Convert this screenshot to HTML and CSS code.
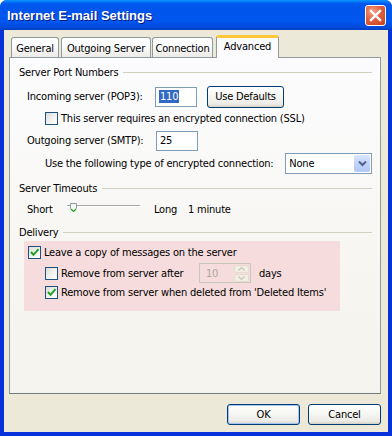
FILE: index.html
```html
<!DOCTYPE html>
<html lang="en">
<head>
    <meta charset="UTF-8">
    <title>Internet E-mail Settings</title>
    <link rel="stylesheet" href="styles.css">
</head>
<body>
<div class="window">
    <div class="titlebar">
        <span class="title">Internet E-mail Settings</span>
        <span class="close-btn">
            <svg width="13" height="13" viewBox="0 0 13 13"><path d="M2 2 L11 11 M11 2 L2 11" stroke="#fff" stroke-width="2.4" stroke-linecap="square"/></svg>
        </span>
    </div>

    <div class="client">
        <!-- Tabs -->
        <div class="tabs">
            <div class="tab tab-general">General</div>
            <div class="tab tab-outgoing">Outgoing Server</div>
            <div class="tab tab-connection">Connection</div>
            <div class="tab tab-advanced active">Advanced</div>
        </div>

        <div class="panel">
            <div class="group-title"><span>Server Port Numbers</span><div class="rule"></div></div>

            <div class="row row-incoming">
                <span class="label port-label">Incoming server (POP3):</span>
                <span class="textbox port-box"><span class="selected">110</span></span>
                <span class="button defaults-btn">Use Defaults</span>
            </div>

            <div class="row row-ssl indent2">
                <span class="checkbox"></span>
                <span class="label">This server requires an encrypted connection (SSL)</span>
            </div>

            <div class="row row-smtp">
                <span class="label port-label smtp-label">Outgoing server (SMTP):</span>
                <span class="textbox port-box">25</span>
            </div>

            <div class="row row-enc">
                <span class="label enc-label">Use the following type of encrypted connection:</span>
                <span class="select">
                    <span class="select-text">None</span>
                    <span class="select-arrow">
                        <svg width="9" height="7" viewBox="0 0 9 7"><path d="M1 1.5 L4.5 5 L8 1.5" fill="none" stroke="#4d6185" stroke-width="2"/></svg>
                    </span>
                </span>
            </div>

            <div class="group-title timeouts-title"><span>Server Timeouts</span><div class="rule"></div></div>

            <div class="row row-slider">
                <span class="label short-label">Short</span>
                <span class="slider">
                    <svg width="74" height="14" viewBox="0 0 74 14">
                        <line x1="0" y1="5.5" x2="73" y2="5.5" stroke="#a7a6aa"/>
                        <line x1="0" y1="6.5" x2="73" y2="6.5" stroke="#ffffff"/>
                        <path d="M3.5 3.5 H9.5 V8.5 L6.5 11.5 L3.5 8.5 Z" fill="#f7f7f4" stroke="#8b9aa0"/>
                        <path d="M4 9 L6.5 11.5 L9 9" fill="none" stroke="#21a121" stroke-width="1.2"/>
                    </svg>
                </span>
                <span class="label long-label">Long</span>
                <span class="label">1 minute</span>
            </div>

            <div class="group-title delivery-title"><span>Delivery</span><div class="rule"></div></div>

            <div class="highlight">
                <div class="row row-leave">
                    <span class="checkbox checked">
                        <svg width="11" height="11" viewBox="0 0 11 11"><path d="M2 5 L4.5 7.8 L9.5 2.2" fill="none" stroke="#21a121" stroke-width="2"/></svg>
                    </span>
                    <span class="label">Leave a copy of messages on the server</span>
                </div>
                <div class="row row-after">
                    <span class="checkbox"></span>
                    <span class="label after-label">Remove from server after</span>
                    <span class="spinner">
                        <span class="spinner-text">10</span>
                        <span class="spinner-btns">
                            <span class="spin-btn"><svg width="7" height="4" viewBox="0 0 7 4"><path d="M0.5 3.5 L3.5 0.5 L6.5 3.5" fill="none" stroke="#c9c7ba" stroke-width="1.2"/></svg></span>
                            <span class="spin-btn"><svg width="7" height="4" viewBox="0 0 7 4"><path d="M0.5 0.5 L3.5 3.5 L6.5 0.5" fill="none" stroke="#c9c7ba" stroke-width="1.2"/></svg></span>
                        </span>
                    </span>
                    <span class="label days-label">days</span>
                </div>
                <div class="row row-deleted">
                    <span class="checkbox checked">
                        <svg width="11" height="11" viewBox="0 0 11 11"><path d="M2 5 L4.5 7.8 L9.5 2.2" fill="none" stroke="#21a121" stroke-width="2"/></svg>
                    </span>
                    <span class="label">Remove from server when deleted from 'Deleted Items'</span>
                </div>
            </div>
        </div>

        <div class="dialog-buttons">
            <span class="button dialog-btn default">OK</span>
            <span class="button dialog-btn">Cancel</span>
        </div>
    </div>
</div>
</body>
</html>
```

FILE: styles.css
```css
body {
    margin: 0;
    background-color: #ffffff;
    font-family: "DejaVu Sans Condensed", "DejaVu Sans", sans-serif;
    font-stretch: condensed;
    font-size: 11px;
    letter-spacing: -0.2px;
    color: #000000;
}

.window {
    width: 392px;
    height: 436px;
    display: flex;
    flex-direction: column;
    background-color: #0831d9;
    border-radius: 7px 7px 0 0;
    overflow: hidden;
}

.titlebar {
    height: 30px;
    flex-shrink: 0;
    display: flex;
    align-items: center;
    justify-content: space-between;
    padding: 0 6px 0 7px;
    background: linear-gradient(#0997ff 0%, #0058ee 12%, #0055ec 40%, #0057ef 70%, #0049da 92%, #003dbf 100%);
}

.title {
    font-family: "Liberation Sans", Arial, sans-serif;
    font-stretch: normal;
    letter-spacing: 0;
    font-weight: bold;
    font-size: 13px;
    color: #ffffff;
    text-shadow: 1px 1px 0 #0a1883;
    margin-top: 1px;
}

.close-btn {
    width: 19px;
    height: 19px;
    display: flex;
    align-items: center;
    justify-content: center;
    border: 1px solid #ffffff;
    border-radius: 3px;
    background: radial-gradient(circle at 35% 30%, #f0a48c 0%, #e2603f 45%, #c4401f 100%);
}

.client {
    flex: 1;
    display: flex;
    flex-direction: column;
    margin: 0 4px 4px 4px;
    background-color: #ece9d8;
}

/* Tabs */
.tabs {
    height: 22px;
    margin-top: 5px;
    padding-left: 7px;
    display: flex;
    align-items: flex-end;
}

.tab {
    height: 20px;
    box-sizing: border-box;
    display: flex;
    align-items: center;
    justify-content: center;
    border: 1px solid #919b9c;
    border-bottom: none;
    border-radius: 3px 3px 0 0;
    background: linear-gradient(#ffffff 0%, #fcfcfe 40%, #ecebe6 100%);
    padding-top: 1px;
}

.tab-general { width: 48px; margin-right: 2px; }
.tab-outgoing { width: 90px; margin-right: 1px; }
.tab-connection { width: 61px; margin-right: 3px; }

.tab.active {
    width: 63px;
    height: 23px;
    margin-bottom: -1px;
    background: #fcfcfe;
    border-top: 3px solid #ffc83c;
    padding-top: 0;
    padding-bottom: 4px;
    position: relative;
    z-index: 1;
}

.panel {
    height: 337px;
    box-sizing: border-box;
    margin: 0 7px 0 5px;
    border: 1px solid #919b9c;
    border-bottom-color: #6f7b7c;
    background: linear-gradient(#fcfcfe 0%, #f7f6f2 60%, #f4f3ee 100%);
    padding: 0 8px 0 9px;
    display: flex;
    flex-direction: column;
}

.group-title {
    height: 14px;
    display: flex;
    align-items: center;
    gap: 5px;
    margin-top: 7px;
}

.group-title .rule {
    flex: 1;
    border-top: 1px solid #d0d0bf;
}

.timeouts-title { margin-top: 7px; }
.delivery-title { margin-top: 7px; }

.row {
    display: flex;
    align-items: center;
}

.label {
    white-space: nowrap;
}

.row-incoming {
    height: 21px;
    margin-top: 7px;
    padding-left: 8px;
}

.port-label { width: 128px; }
.smtp-label { width: 129px; }

.textbox {
    height: 20px;
    box-sizing: border-box;
    border: 1px solid #7f9db9;
    background-color: #ffffff;
    display: flex;
    align-items: center;
    padding-left: 3px;
}

.port-box { width: 42px; }

.selected {
    background-color: #316ac5;
    color: #ffffff;
    padding: 0 1px;
    line-height: 13px;
}

.button {
    display: flex;
    align-items: center;
    justify-content: center;
    box-sizing: border-box;
    border: 1px solid #003c74;
    border-radius: 3px;
    background: linear-gradient(#ffffff 0%, #f7f7f4 40%, #ecebe6 85%, #d6d0c5 100%);
}

.defaults-btn {
    width: 77px;
    height: 22px;
    margin-left: 10px;
}

.row-ssl {
    height: 13px;
    margin-top: 5px;
    padding-left: 26px;
}

.checkbox {
    width: 13px;
    height: 13px;
    box-sizing: border-box;
    flex-shrink: 0;
    border: 1px solid #1c5180;
    background: linear-gradient(135deg, #dcdcd7 0%, #f4f4f1 60%, #ffffff 100%);
    margin-right: 3px;
    display: flex;
    align-items: center;
    justify-content: center;
}

.row-smtp {
    height: 21px;
    margin-top: 5px;
    padding-left: 8px;
}

.row-enc {
    height: 21px;
    margin-top: 2px;
    padding-left: 26px;
}

.enc-label { width: 241px; }

.select {
    width: 87px;
    height: 21px;
    box-sizing: border-box;
    border: 1px solid #7f9db9;
    background-color: #ffffff;
    display: flex;
    align-items: center;
    justify-content: space-between;
    padding: 0 1px 0 3px;
}

.select-arrow {
    width: 16px;
    height: 17px;
    border-radius: 2px;
    background: linear-gradient(#dbe6fd 0%, #c1d3fb 50%, #b4c8f6 100%);
    display: flex;
    align-items: center;
    justify-content: center;
}

.row-slider {
    height: 18px;
    margin-top: 5px;
    padding-left: 8px;
}

.short-label { width: 40px; }

.slider {
    width: 74px;
    height: 14px;
    margin-bottom: 4px;
    display: flex;
}

.long-label {
    margin-left: 13px;
    width: 34px;
}

.highlight {
    width: 316px;
    height: 70px;
    box-sizing: border-box;
    margin-top: 2px;
    margin-left: 5px;
    background-color: #f6dcdc;
    padding: 5px 0 0 4px;
    display: flex;
    flex-direction: column;
}

.row-leave { height: 13px; }

.row-after {
    height: 20px;
    margin-top: 4px;
    padding-left: 17px;
}

.after-label { width: 138px; }

.spinner {
    width: 52px;
    height: 20px;
    box-sizing: border-box;
    border: 1px solid #c9c7ba;
    display: flex;
    align-items: center;
    justify-content: space-between;
    padding: 0 1px 0 6px;
}

.spinner-text { color: #aca899; }

.spinner-btns {
    display: flex;
    flex-direction: column;
    gap: 1px;
}

.spin-btn {
    width: 15px;
    height: 8px;
    border-radius: 2px;
    background-color: #f2eee4;
    border: 1px solid #e4ded2;
    box-sizing: border-box;
    display: flex;
    align-items: center;
    justify-content: center;
}

.days-label { margin-left: 8px; }

.row-deleted {
    height: 13px;
    margin-top: 3px;
    padding-left: 17px;
}

.dialog-buttons {
    display: flex;
    justify-content: flex-end;
    gap: 8px;
    margin: 10px 7px 0 0;
}

.dialog-btn {
    width: 73px;
    height: 21px;
}

.dialog-btn.default {
    box-shadow: inset 0 0 0 1px #a4c3f6;
}
```
